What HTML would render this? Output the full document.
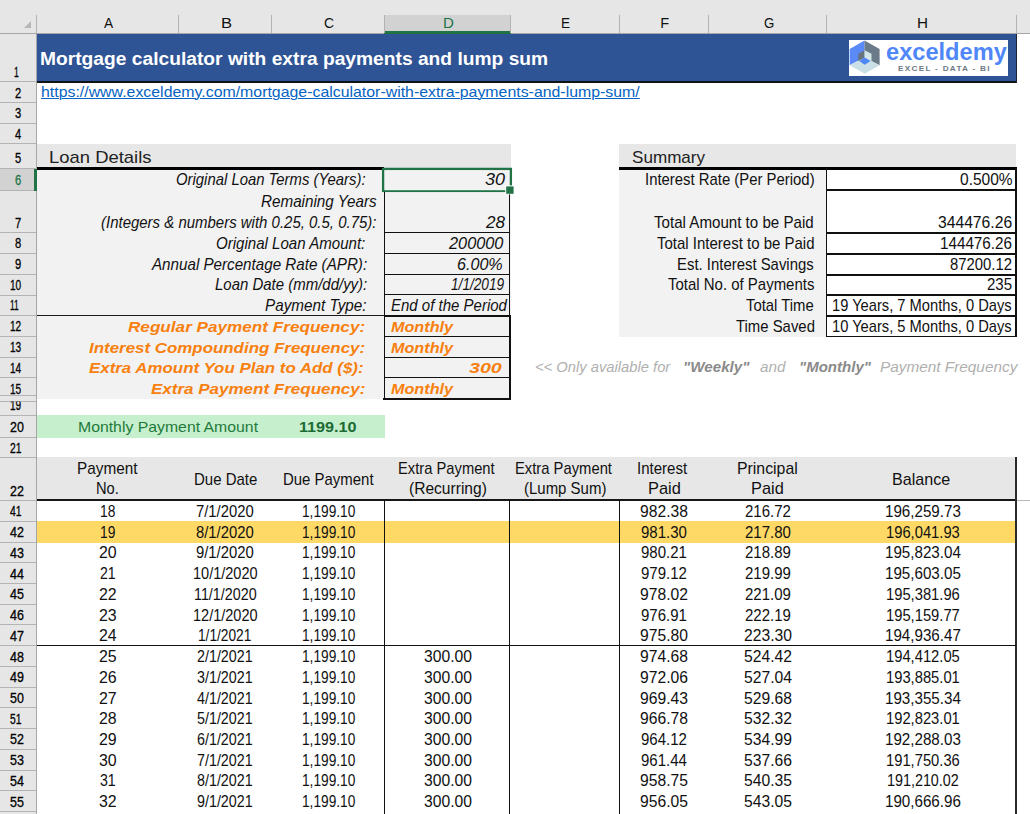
<!DOCTYPE html>
<html lang="en"><head><meta charset="utf-8"><title>Mortgage calculator with extra payments and lump sum</title>
<style>
html,body{margin:0;padding:0;background:#fff;}
body{width:1030px;height:814px;position:relative;overflow:hidden;font-family:"Liberation Sans", sans-serif;}
.r{position:absolute;}
.t{position:absolute;white-space:pre;transform-origin:0 0;line-height:1;}
.h{-webkit-text-stroke:0.3px currentColor;}
.link{text-decoration:underline;text-decoration-thickness:1px;text-underline-offset:1px;}
</style></head><body>
<div class="r" style="left:0.00px;top:0.00px;width:1030.00px;height:33.50px;background:#e6e6e6"></div>
<div class="r" style="left:0.00px;top:33.50px;width:36.50px;height:780.50px;background:#e6e6e6"></div>
<div class="r" style="left:383.50px;top:14.80px;width:127.00px;height:18.70px;background:#d2d2d2"></div>
<div class="r" style="left:0.00px;top:169.00px;width:36.00px;height:21.50px;background:#d2d2d2"></div>
<div class="r" style="left:0.00px;top:33.00px;width:1030.00px;height:1.00px;background:#a6a6a6"></div>
<div class="r" style="left:383.50px;top:31.00px;width:127.00px;height:3.00px;background:#217346"></div>
<div class="r" style="left:36.00px;top:14.80px;width:1.00px;height:18.70px;background:#b2b2b2"></div>
<div class="r" style="left:177.50px;top:14.80px;width:1.00px;height:18.70px;background:#b2b2b2"></div>
<div class="r" style="left:271.00px;top:14.80px;width:1.00px;height:18.70px;background:#b2b2b2"></div>
<div class="r" style="left:383.50px;top:14.80px;width:1.00px;height:18.70px;background:#b2b2b2"></div>
<div class="r" style="left:509.50px;top:14.80px;width:1.00px;height:18.70px;background:#b2b2b2"></div>
<div class="r" style="left:618.80px;top:14.80px;width:1.00px;height:18.70px;background:#b2b2b2"></div>
<div class="r" style="left:707.50px;top:14.80px;width:1.00px;height:18.70px;background:#b2b2b2"></div>
<div class="r" style="left:826.00px;top:14.80px;width:1.00px;height:18.70px;background:#b2b2b2"></div>
<div class="r" style="left:1015.50px;top:14.80px;width:1.00px;height:18.70px;background:#b2b2b2"></div>
<div class="r" style="left:36.00px;top:34.00px;width:1.00px;height:780.00px;background:#a6a6a6"></div>
<div class="r" style="left:0.00px;top:81.30px;width:36.00px;height:1.00px;background:#b4b4b4"></div>
<div class="r" style="left:0.00px;top:102.20px;width:36.00px;height:1.00px;background:#b4b4b4"></div>
<div class="r" style="left:0.00px;top:122.80px;width:36.00px;height:1.00px;background:#b4b4b4"></div>
<div class="r" style="left:0.00px;top:143.30px;width:36.00px;height:1.00px;background:#b4b4b4"></div>
<div class="r" style="left:0.00px;top:168.40px;width:36.00px;height:1.00px;background:#b4b4b4"></div>
<div class="r" style="left:0.00px;top:190.00px;width:36.00px;height:1.00px;background:#b4b4b4"></div>
<div class="r" style="left:0.00px;top:232.30px;width:36.00px;height:1.00px;background:#b4b4b4"></div>
<div class="r" style="left:0.00px;top:253.00px;width:36.00px;height:1.00px;background:#b4b4b4"></div>
<div class="r" style="left:0.00px;top:273.80px;width:36.00px;height:1.00px;background:#b4b4b4"></div>
<div class="r" style="left:0.00px;top:294.60px;width:36.00px;height:1.00px;background:#b4b4b4"></div>
<div class="r" style="left:0.00px;top:315.00px;width:36.00px;height:1.00px;background:#b4b4b4"></div>
<div class="r" style="left:0.00px;top:335.90px;width:36.00px;height:1.00px;background:#b4b4b4"></div>
<div class="r" style="left:0.00px;top:356.70px;width:36.00px;height:1.00px;background:#b4b4b4"></div>
<div class="r" style="left:0.00px;top:377.40px;width:36.00px;height:1.00px;background:#b4b4b4"></div>
<div class="r" style="left:0.00px;top:395.30px;width:36.00px;height:1.00px;background:#b4b4b4"></div>
<div class="r" style="left:0.00px;top:414.50px;width:36.00px;height:1.00px;background:#b4b4b4"></div>
<div class="r" style="left:0.00px;top:437.10px;width:36.00px;height:1.00px;background:#b4b4b4"></div>
<div class="r" style="left:0.00px;top:457.30px;width:36.00px;height:1.00px;background:#b4b4b4"></div>
<div class="r" style="left:0.00px;top:500.10px;width:36.00px;height:1.00px;background:#b4b4b4"></div>
<div class="r" style="left:0.00px;top:520.83px;width:36.00px;height:1.00px;background:#b4b4b4"></div>
<div class="r" style="left:0.00px;top:541.56px;width:36.00px;height:1.00px;background:#b4b4b4"></div>
<div class="r" style="left:0.00px;top:562.29px;width:36.00px;height:1.00px;background:#b4b4b4"></div>
<div class="r" style="left:0.00px;top:583.02px;width:36.00px;height:1.00px;background:#b4b4b4"></div>
<div class="r" style="left:0.00px;top:603.75px;width:36.00px;height:1.00px;background:#b4b4b4"></div>
<div class="r" style="left:0.00px;top:624.48px;width:36.00px;height:1.00px;background:#b4b4b4"></div>
<div class="r" style="left:0.00px;top:645.21px;width:36.00px;height:1.00px;background:#b4b4b4"></div>
<div class="r" style="left:0.00px;top:665.94px;width:36.00px;height:1.00px;background:#b4b4b4"></div>
<div class="r" style="left:0.00px;top:686.67px;width:36.00px;height:1.00px;background:#b4b4b4"></div>
<div class="r" style="left:0.00px;top:707.40px;width:36.00px;height:1.00px;background:#b4b4b4"></div>
<div class="r" style="left:0.00px;top:728.13px;width:36.00px;height:1.00px;background:#b4b4b4"></div>
<div class="r" style="left:0.00px;top:748.86px;width:36.00px;height:1.00px;background:#b4b4b4"></div>
<div class="r" style="left:0.00px;top:769.59px;width:36.00px;height:1.00px;background:#b4b4b4"></div>
<div class="r" style="left:0.00px;top:790.32px;width:36.00px;height:1.00px;background:#b4b4b4"></div>
<div class="r" style="left:0.00px;top:811.05px;width:36.00px;height:1.00px;background:#b4b4b4"></div>
<div class="r" style="left:0.00px;top:831.78px;width:36.00px;height:1.00px;background:#b4b4b4"></div>
<div class="r" style="left:0.00px;top:401.00px;width:36.00px;height:1.00px;background:#b4b4b4"></div>
<div class="r" style="left:0.00px;top:811.50px;width:36.00px;height:1.00px;background:#e6e6e6"></div>
<div class="r" style="left:33.70px;top:169.00px;width:3.30px;height:22.00px;background:#217346"></div>
<div class="r" style="left:37.00px;top:34.00px;width:979.00px;height:47.40px;background:#2f5496"></div>
<div class="r" style="left:37.00px;top:81.00px;width:980.00px;height:1.60px;background:#101418"></div>
<div class="r" style="left:1015.50px;top:34.00px;width:1.50px;height:48.60px;background:#1a2233"></div>
<div class="r" style="left:849.00px;top:39.80px;width:159.20px;height:35.90px;background:#ffffff"></div>
<div class="r" style="left:37.00px;top:143.80px;width:474.00px;height:24.20px;background:#e7e7e7"></div>
<div class="r" style="left:37.00px;top:168.00px;width:474.00px;height:231.40px;background:#f2f2f2"></div>
<div class="r" style="left:37.00px;top:167.00px;width:347.00px;height:2.60px;background:#000"></div>
<div class="r" style="left:37.00px;top:314.80px;width:347.00px;height:1.60px;background:#1a1a1a"></div>
<div class="r" style="left:383.60px;top:190.00px;width:1.40px;height:209.60px;background:#111"></div>
<div class="r" style="left:509.00px;top:190.00px;width:1.30px;height:126.00px;background:#111"></div>
<div class="r" style="left:508.80px;top:316.00px;width:2.00px;height:83.60px;background:#111"></div>
<div class="r" style="left:384.00px;top:232.00px;width:126.00px;height:1.30px;background:#111"></div>
<div class="r" style="left:384.00px;top:253.00px;width:126.00px;height:1.30px;background:#111"></div>
<div class="r" style="left:384.00px;top:274.00px;width:126.00px;height:1.30px;background:#111"></div>
<div class="r" style="left:384.00px;top:294.00px;width:126.00px;height:1.30px;background:#111"></div>
<div class="r" style="left:384.00px;top:336.00px;width:126.00px;height:1.30px;background:#111"></div>
<div class="r" style="left:384.00px;top:357.00px;width:126.00px;height:1.30px;background:#111"></div>
<div class="r" style="left:384.00px;top:377.00px;width:126.00px;height:1.30px;background:#111"></div>
<div class="r" style="left:384.00px;top:314.70px;width:126.60px;height:2.00px;background:#111"></div>
<div class="r" style="left:383.40px;top:397.60px;width:127.20px;height:2.10px;background:#111"></div>
<div class="r" style="left:619.30px;top:143.80px;width:397.20px;height:24.20px;background:#e7e7e7"></div>
<div class="r" style="left:619.30px;top:168.00px;width:207.70px;height:169.20px;background:#f2f2f2"></div>
<div class="r" style="left:619.30px;top:166.80px;width:397.70px;height:2.90px;background:#000"></div>
<div class="r" style="left:825.80px;top:168.00px;width:1.60px;height:169.40px;background:#111"></div>
<div class="r" style="left:1015.20px;top:168.00px;width:1.70px;height:169.40px;background:#111"></div>
<div class="r" style="left:826.00px;top:189.00px;width:190.00px;height:1.60px;background:#111"></div>
<div class="r" style="left:826.00px;top:232.00px;width:190.00px;height:1.60px;background:#111"></div>
<div class="r" style="left:826.00px;top:253.00px;width:190.00px;height:1.60px;background:#111"></div>
<div class="r" style="left:826.00px;top:274.00px;width:190.00px;height:1.60px;background:#111"></div>
<div class="r" style="left:826.00px;top:294.00px;width:190.00px;height:1.60px;background:#111"></div>
<div class="r" style="left:826.00px;top:315.00px;width:190.00px;height:1.60px;background:#111"></div>
<div class="r" style="left:825.60px;top:335.70px;width:191.40px;height:1.70px;background:#111"></div>
<div class="r" style="left:37.00px;top:414.50px;width:347.60px;height:23.20px;background:#c6efce"></div>
<div class="r" style="left:37.00px;top:457.40px;width:979.00px;height:42.10px;background:#e7e7e7"></div>
<div class="r" style="left:37.00px;top:498.70px;width:980.00px;height:2.10px;background:#161616"></div>
<div class="r" style="left:37.00px;top:521.20px;width:979.00px;height:21.60px;background:#ffd966"></div>
<div class="r" style="left:384.00px;top:500.00px;width:1.30px;height:314.00px;background:#111"></div>
<div class="r" style="left:509.00px;top:500.00px;width:1.30px;height:314.00px;background:#111"></div>
<div class="r" style="left:619.00px;top:500.00px;width:1.30px;height:314.00px;background:#111"></div>
<div class="r" style="left:1014.90px;top:457.20px;width:2.00px;height:356.80px;background:#2a2a2a"></div>
<div class="r" style="left:37.00px;top:645.00px;width:979.00px;height:1.30px;background:#111"></div>
<div class="r" style="left:1017.00px;top:500.00px;width:13.00px;height:1.40px;background:#b8b8b8"></div>
<div class="r" style="left:1016.00px;top:33.00px;width:14.00px;height:1.00px;background:#a6a6a6"></div>
<svg class="r" style="left:0;top:0" width="1030" height="814" viewBox="0 0 1030 814">
<polygon points="31,21 31,28 24,28" fill="#b7b7b7"/>
<g>
<polygon points="849.6,49 864.5,40.6 864.5,57.6 849.6,65.3" fill="#5a8af8"/>
<polygon points="864.5,40.6 879.6,49 879.6,65.3 864.5,57.6" fill="#6b7a88"/>
<polygon points="849.6,65.3 864.5,57.4 879.6,65.3 864.7,73.8" fill="#cbe0e6"/>
<polygon points="858.2,53.8 864.5,50.3 864.5,57.8 858.2,61" fill="#66747f"/>
<polygon points="864.5,50.3 871.5,53.8 871.5,61.3 864.5,57.6" fill="#d3e6ea"/>
<polygon points="864.5,57.4 870.6,61.1 864.7,64.8 859.2,61.1" fill="#4f86f7"/>
</g>
<rect x="383.1" y="168.9" width="127.8" height="22" fill="none" stroke="#217346" stroke-width="2.3"/>
<rect x="384.6" y="189.2" width="124" height="1" fill="#fff"/>
<rect x="505.2" y="185.4" width="9" height="9" fill="#fff"/>
<rect x="506.2" y="186.4" width="7.4" height="7.4" fill="#217346"/>
</svg>
<span class="t" id="t0" style="left:104.05px;top:16.00px;font-size:14.60px;color:#111;transform:scaleX(0.9400);">A</span>
<span class="t" id="t1" style="left:220.56px;top:16.00px;font-size:14.60px;color:#111;transform:scaleX(1.1375);">B</span>
<span class="t" id="t2" style="left:324.45px;top:16.00px;font-size:14.60px;color:#111;transform:scaleX(0.9600);">C</span>
<span class="t" id="t3" style="left:442.82px;top:16.00px;font-size:14.60px;color:#217346;transform:scaleX(1.0333);">D</span>
<span class="t" id="t4" style="left:561.02px;top:16.00px;font-size:14.60px;color:#111;transform:scaleX(0.9333);">E</span>
<span class="t" id="t5" style="left:660.15px;top:16.00px;font-size:14.60px;color:#111;transform:scaleX(1.0000);">F</span>
<span class="t" id="t6" style="left:763.75px;top:16.00px;font-size:14.60px;color:#111;transform:scaleX(0.9091);">G</span>
<span class="t" id="t7" style="left:917.01px;top:16.00px;font-size:14.60px;color:#111;transform:scaleX(1.0444);">H</span>
<span class="t h" id="t8" style="left:13.90px;top:65.00px;font-size:14.40px;color:#000;transform:scaleX(0.6000);">1</span>
<span class="t h" id="t9" style="left:14.70px;top:86.00px;font-size:14.40px;color:#000;transform:scaleX(0.7750);">2</span>
<span class="t h" id="t10" style="left:14.70px;top:106.00px;font-size:14.40px;color:#000;transform:scaleX(0.7750);">3</span>
<span class="t h" id="t11" style="left:14.70px;top:127.00px;font-size:14.40px;color:#000;transform:scaleX(0.7750);">4</span>
<span class="t h" id="t12" style="left:14.70px;top:151.00px;font-size:14.40px;color:#000;transform:scaleX(0.7750);">5</span>
<span class="t h" id="t13" style="left:14.70px;top:173.00px;font-size:14.40px;color:#217346;transform:scaleX(0.7750);">6</span>
<span class="t h" id="t14" style="left:14.70px;top:216.00px;font-size:14.40px;color:#000;transform:scaleX(0.7750);">7</span>
<span class="t h" id="t15" style="left:14.70px;top:236.00px;font-size:14.40px;color:#000;transform:scaleX(0.7750);">8</span>
<span class="t h" id="t16" style="left:14.70px;top:257.00px;font-size:14.40px;color:#000;transform:scaleX(0.7750);">9</span>
<span class="t h" id="t17" style="left:9.50px;top:278.00px;font-size:14.40px;color:#000;transform:scaleX(0.6998);">10</span>
<span class="t h" id="t18" style="left:9.62px;top:298.00px;font-size:14.40px;color:#000;transform:scaleX(0.5813);">11</span>
<span class="t h" id="t19" style="left:9.50px;top:319.00px;font-size:14.40px;color:#000;transform:scaleX(0.6998);">12</span>
<span class="t h" id="t20" style="left:9.50px;top:340.00px;font-size:14.40px;color:#000;transform:scaleX(0.6998);">13</span>
<span class="t h" id="t21" style="left:9.50px;top:361.00px;font-size:14.40px;color:#000;transform:scaleX(0.6998);">14</span>
<span class="t h" id="t22" style="left:9.50px;top:382.00px;font-size:14.40px;color:#000;transform:scaleX(0.6998);">15</span>
<span class="t h" id="t23" style="left:9.50px;top:398.00px;font-size:14.40px;color:#000;transform:scaleX(0.6998);clip-path:inset(3.6px -2px -2px -2px);">19</span>
<span class="t h" id="t24" style="left:10.20px;top:420.00px;font-size:14.40px;color:#000;transform:scaleX(0.8686);">20</span>
<span class="t h" id="t25" style="left:10.20px;top:441.00px;font-size:14.40px;color:#000;transform:scaleX(0.7186);">21</span>
<span class="t h" id="t26" style="left:10.20px;top:484.00px;font-size:14.40px;color:#000;transform:scaleX(0.8686);">22</span>
<span class="t h" id="t27" style="left:10.20px;top:504.00px;font-size:14.40px;color:#000;transform:scaleX(0.7186);">41</span>
<span class="t h" id="t28" style="left:10.20px;top:525.00px;font-size:14.40px;color:#000;transform:scaleX(0.8686);">42</span>
<span class="t h" id="t29" style="left:10.20px;top:546.00px;font-size:14.40px;color:#000;transform:scaleX(0.8686);">43</span>
<span class="t h" id="t30" style="left:10.20px;top:567.00px;font-size:14.40px;color:#000;transform:scaleX(0.8686);">44</span>
<span class="t h" id="t31" style="left:10.20px;top:587.00px;font-size:14.40px;color:#000;transform:scaleX(0.8686);">45</span>
<span class="t h" id="t32" style="left:10.20px;top:608.00px;font-size:14.40px;color:#000;transform:scaleX(0.8686);">46</span>
<span class="t h" id="t33" style="left:10.20px;top:629.00px;font-size:14.40px;color:#000;transform:scaleX(0.8686);">47</span>
<span class="t h" id="t34" style="left:10.20px;top:650.00px;font-size:14.40px;color:#000;transform:scaleX(0.8686);">48</span>
<span class="t h" id="t35" style="left:10.20px;top:670.00px;font-size:14.40px;color:#000;transform:scaleX(0.8686);">49</span>
<span class="t h" id="t36" style="left:10.20px;top:691.00px;font-size:14.40px;color:#000;transform:scaleX(0.8686);">50</span>
<span class="t h" id="t37" style="left:10.20px;top:712.00px;font-size:14.40px;color:#000;transform:scaleX(0.7186);">51</span>
<span class="t h" id="t38" style="left:10.20px;top:732.00px;font-size:14.40px;color:#000;transform:scaleX(0.8686);">52</span>
<span class="t h" id="t39" style="left:10.20px;top:753.00px;font-size:14.40px;color:#000;transform:scaleX(0.8686);">53</span>
<span class="t h" id="t40" style="left:10.20px;top:774.00px;font-size:14.40px;color:#000;transform:scaleX(0.8686);">54</span>
<span class="t h" id="t41" style="left:10.20px;top:795.00px;font-size:14.40px;color:#000;transform:scaleX(0.8686);">55</span>
<span class="t" id="t42" style="left:39.93px;top:50.00px;font-size:18.00px;color:#fff;font-weight:bold;transform:scaleX(1.0673);">Mortgage calculator with extra payments and lump sum</span>
<span class="t link" id="t43" style="left:40.50px;top:85.00px;font-size:14.30px;color:#0563c1;transform:scaleX(1.1104);">https://www.exceldemy.com/mortgage-calculator-with-extra-payments-and-lump-sum/</span>
<span class="t" id="t44" style="left:48.52px;top:149.00px;font-size:17.00px;color:#222;transform:scaleX(1.0849);">Loan Details</span>
<span class="t" id="t45" style="left:631.80px;top:149.00px;font-size:17.00px;color:#222;transform:scaleX(1.0050);">Summary</span>
<span class="t" id="t46" style="left:176.30px;top:171.00px;font-size:16.20px;color:#111;font-style:italic;transform:scaleX(0.9187);">Original Loan Terms (Years):</span>
<span class="t" id="t47" style="left:260.60px;top:193.00px;font-size:16.20px;color:#111;font-style:italic;transform:scaleX(0.9401);">Remaining Years</span>
<span class="t" id="t48" style="left:100.50px;top:214.00px;font-size:16.20px;color:#111;font-style:italic;transform:scaleX(0.9249);">(Integers &amp; numbers with 0.25, 0.5, 0.75):</span>
<span class="t" id="t49" style="left:216.00px;top:235.00px;font-size:16.20px;color:#111;font-style:italic;transform:scaleX(0.9304);">Original Loan Amount:</span>
<span class="t" id="t50" style="left:151.64px;top:256.00px;font-size:16.20px;color:#111;font-style:italic;transform:scaleX(0.9376);">Annual Percentage Rate (APR):</span>
<span class="t" id="t51" style="left:214.50px;top:276.00px;font-size:16.20px;color:#111;font-style:italic;transform:scaleX(0.9248);">Loan Date (mm/dd/yy):</span>
<span class="t" id="t52" style="left:265.00px;top:297.00px;font-size:16.20px;color:#111;font-style:italic;transform:scaleX(0.9425);">Payment Type:</span>
<span class="t" id="t53" style="left:128.00px;top:319.00px;font-size:15.30px;color:#f8800f;font-weight:bold;font-style:italic;transform:scaleX(1.1202);">Regular Payment Frequency:</span>
<span class="t" id="t54" style="left:89.00px;top:340.00px;font-size:15.30px;color:#f8800f;font-weight:bold;font-style:italic;transform:scaleX(1.1050);">Interest Compounding Frequency:</span>
<span class="t" id="t55" style="left:89.00px;top:360.00px;font-size:15.30px;color:#f8800f;font-weight:bold;font-style:italic;transform:scaleX(1.1039);">Extra Amount You Plan to Add ($):</span>
<span class="t" id="t56" style="left:150.70px;top:381.00px;font-size:15.30px;color:#f8800f;font-weight:bold;font-style:italic;transform:scaleX(1.1110);">Extra Payment Frequency:</span>
<span class="t" id="t57" style="left:484.70px;top:171.00px;font-size:16.20px;color:#111;font-style:italic;transform:scaleX(1.1109);">30</span>
<span class="t" id="t58" style="left:485.75px;top:214.00px;font-size:16.20px;color:#111;font-style:italic;transform:scaleX(1.0525);">28</span>
<span class="t" id="t59" style="left:449.41px;top:235.00px;font-size:16.20px;color:#111;font-style:italic;transform:scaleX(1.0070);">200000</span>
<span class="t" id="t60" style="left:457.00px;top:256.00px;font-size:16.20px;color:#111;font-style:italic;transform:scaleX(0.9955);">6.00%</span>
<span class="t" id="t61" style="left:450.80px;top:276.00px;font-size:16.20px;color:#111;font-style:italic;transform:scaleX(0.8427);">1/1/2019</span>
<span class="t" id="t62" style="left:391.00px;top:297.00px;font-size:16.20px;color:#111;font-style:italic;transform:scaleX(0.9271);">End of the Period</span>
<span class="t" id="t63" style="left:391.00px;top:319.00px;font-size:15.30px;color:#f8800f;font-weight:bold;font-style:italic;transform:scaleX(1.0579);">Monthly</span>
<span class="t" id="t64" style="left:391.00px;top:340.00px;font-size:15.30px;color:#f8800f;font-weight:bold;font-style:italic;transform:scaleX(1.0579);">Monthly</span>
<span class="t" id="t65" style="left:391.00px;top:381.00px;font-size:15.30px;color:#f8800f;font-weight:bold;font-style:italic;transform:scaleX(1.0579);">Monthly</span>
<span class="t" id="t66" style="left:469.40px;top:360.00px;font-size:15.30px;color:#f8800f;font-weight:bold;font-style:italic;transform:scaleX(1.2839);">300</span>
<span class="t" id="t67" style="left:645.38px;top:171.00px;font-size:16.20px;color:#111;transform:scaleX(0.9195);">Interest Rate (Per Period)</span>
<span class="t" id="t68" style="left:654.40px;top:214.00px;font-size:16.20px;color:#111;transform:scaleX(0.9340);">Total Amount to be Paid</span>
<span class="t" id="t69" style="left:657.40px;top:235.00px;font-size:16.20px;color:#111;transform:scaleX(0.9263);">Total Interest to be Paid</span>
<span class="t" id="t70" style="left:677.38px;top:256.00px;font-size:16.20px;color:#111;transform:scaleX(0.9209);">Est. Interest Savings</span>
<span class="t" id="t71" style="left:667.70px;top:276.00px;font-size:16.20px;color:#111;transform:scaleX(0.9245);">Total No. of Payments</span>
<span class="t" id="t72" style="left:746.00px;top:297.00px;font-size:16.20px;color:#111;transform:scaleX(0.9182);">Total Time</span>
<span class="t" id="t73" style="left:736.00px;top:318.00px;font-size:16.20px;color:#111;transform:scaleX(0.9202);">Time Saved</span>
<span class="t" id="t74" style="left:959.70px;top:171.00px;font-size:16.20px;color:#111;transform:scaleX(0.9595);">0.500%</span>
<span class="t" id="t75" style="left:938.20px;top:214.00px;font-size:16.20px;color:#111;transform:scaleX(0.9684);">344476.26</span>
<span class="t" id="t76" style="left:940.36px;top:235.00px;font-size:16.20px;color:#111;transform:scaleX(0.9402);">144476.26</span>
<span class="t" id="t77" style="left:950.30px;top:256.00px;font-size:16.20px;color:#111;transform:scaleX(0.9183);">87200.12</span>
<span class="t" id="t78" style="left:987.20px;top:276.00px;font-size:16.20px;color:#111;transform:scaleX(0.9294);">235</span>
<span class="t" id="t79" style="left:832.49px;top:297.00px;font-size:16.20px;color:#111;transform:scaleX(0.9074);">19 Years, 7 Months, 0 Days</span>
<span class="t" id="t80" style="left:832.49px;top:318.00px;font-size:16.20px;color:#111;transform:scaleX(0.9074);">10 Years, 5 Months, 0 Days</span>
<span class="t" id="t81" style="left:535.10px;top:360.00px;font-size:14.60px;color:#b0b0b0;font-style:italic;transform:scaleX(1.0104);">&lt;&lt; Only available for</span>
<span class="t" id="t82" style="left:682.96px;top:360.00px;font-size:14.60px;color:#8a8a8a;font-weight:bold;font-style:italic;transform:scaleX(1.0399);">"Weekly"</span>
<span class="t" id="t83" style="left:760.00px;top:360.00px;font-size:14.60px;color:#b0b0b0;font-style:italic;transform:scaleX(1.0463);">and</span>
<span class="t" id="t84" style="left:798.77px;top:360.00px;font-size:14.60px;color:#8a8a8a;font-weight:bold;font-style:italic;transform:scaleX(1.0308);">"Monthly"</span>
<span class="t" id="t85" style="left:880.40px;top:360.00px;font-size:14.60px;color:#b0b0b0;font-style:italic;transform:scaleX(1.0514);">Payment Frequency</span>
<span class="t" id="t86" style="left:77.90px;top:420.00px;font-size:14.40px;color:#1f7a3a;transform:scaleX(1.0979);">Monthly Payment Amount</span>
<span class="t" id="t87" style="left:299.40px;top:420.00px;font-size:14.40px;color:#1b6b33;font-weight:bold;transform:scaleX(1.1226);">1199.10</span>
<span class="t" id="t88" style="left:77.05px;top:460.00px;font-size:16.20px;color:#111;transform:scaleX(0.9466);">Payment</span>
<span class="t" id="t89" style="left:95.99px;top:480.00px;font-size:16.20px;color:#111;transform:scaleX(0.9074);">No.</span>
<span class="t" id="t90" style="left:193.97px;top:471.00px;font-size:16.20px;color:#111;transform:scaleX(0.9260);">Due Date</span>
<span class="t" id="t91" style="left:282.98px;top:471.00px;font-size:16.20px;color:#111;transform:scaleX(0.9234);">Due Payment</span>
<span class="t" id="t92" style="left:398.39px;top:460.00px;font-size:16.20px;color:#111;transform:scaleX(0.9105);">Extra Payment</span>
<span class="t" id="t93" style="left:409.24px;top:480.00px;font-size:16.20px;color:#111;transform:scaleX(0.9615);">(Recurring)</span>
<span class="t" id="t94" style="left:514.99px;top:460.00px;font-size:16.20px;color:#111;transform:scaleX(0.9133);">Extra Payment</span>
<span class="t" id="t95" style="left:523.57px;top:480.00px;font-size:16.20px;color:#111;transform:scaleX(0.9251);">(Lump Sum)</span>
<span class="t" id="t96" style="left:637.47px;top:460.00px;font-size:16.20px;color:#111;transform:scaleX(0.9292);">Interest</span>
<span class="t" id="t97" style="left:647.99px;top:480.00px;font-size:16.20px;color:#111;transform:scaleX(1.0133);">Paid</span>
<span class="t" id="t98" style="left:736.52px;top:460.00px;font-size:16.20px;color:#111;transform:scaleX(0.9788);">Principal</span>
<span class="t" id="t99" style="left:751.49px;top:480.00px;font-size:16.20px;color:#111;transform:scaleX(1.0100);">Paid</span>
<span class="t" id="t100" style="left:892.01px;top:471.00px;font-size:16.20px;color:#111;transform:scaleX(0.9949);">Balance</span>
<span class="t" id="t101" style="left:99.60px;top:503.00px;font-size:16.20px;color:#111;transform:scaleX(0.8528);">18</span>
<span class="t" id="t102" style="left:196.45px;top:503.00px;font-size:16.20px;color:#111;transform:scaleX(0.9158);">7/1/2020</span>
<span class="t" id="t103" style="left:302.20px;top:503.00px;font-size:16.20px;color:#111;transform:scaleX(0.8467);">1,199.10</span>
<span class="t" id="t104" style="left:640.25px;top:503.00px;font-size:16.20px;color:#111;transform:scaleX(0.9675);">982.38</span>
<span class="t" id="t105" style="left:745.45px;top:503.00px;font-size:16.20px;color:#111;transform:scaleX(0.9271);">216.72</span>
<span class="t" id="t106" style="left:884.51px;top:503.00px;font-size:16.20px;color:#111;transform:scaleX(0.9361);">196,259.73</span>
<span class="t" id="t107" style="left:99.60px;top:524.00px;font-size:16.20px;color:#111;transform:scaleX(0.8528);">19</span>
<span class="t" id="t108" style="left:196.45px;top:524.00px;font-size:16.20px;color:#111;transform:scaleX(0.9158);">8/1/2020</span>
<span class="t" id="t109" style="left:302.20px;top:524.00px;font-size:16.20px;color:#111;transform:scaleX(0.8467);">1,199.10</span>
<span class="t" id="t110" style="left:641.25px;top:524.00px;font-size:16.20px;color:#111;transform:scaleX(0.9271);">981.30</span>
<span class="t" id="t111" style="left:745.45px;top:524.00px;font-size:16.20px;color:#111;transform:scaleX(0.9271);">217.80</span>
<span class="t" id="t112" style="left:885.54px;top:524.00px;font-size:16.20px;color:#111;transform:scaleX(0.9111);">196,041.93</span>
<span class="t" id="t113" style="left:98.85px;top:544.00px;font-size:16.20px;color:#111;transform:scaleX(0.9832);">20</span>
<span class="t" id="t114" style="left:196.45px;top:544.00px;font-size:16.20px;color:#111;transform:scaleX(0.9158);">9/1/2020</span>
<span class="t" id="t115" style="left:302.20px;top:544.00px;font-size:16.20px;color:#111;transform:scaleX(0.8467);">1,199.10</span>
<span class="t" id="t116" style="left:641.25px;top:544.00px;font-size:16.20px;color:#111;transform:scaleX(0.9271);">980.21</span>
<span class="t" id="t117" style="left:745.45px;top:544.00px;font-size:16.20px;color:#111;transform:scaleX(0.9271);">218.89</span>
<span class="t" id="t118" style="left:884.51px;top:544.00px;font-size:16.20px;color:#111;transform:scaleX(0.9361);">195,823.04</span>
<span class="t" id="t119" style="left:99.85px;top:565.00px;font-size:16.20px;color:#111;transform:scaleX(0.8721);">21</span>
<span class="t" id="t120" style="left:192.55px;top:565.00px;font-size:16.20px;color:#111;transform:scaleX(0.8970);">10/1/2020</span>
<span class="t" id="t121" style="left:302.20px;top:565.00px;font-size:16.20px;color:#111;transform:scaleX(0.8467);">1,199.10</span>
<span class="t" id="t122" style="left:641.25px;top:565.00px;font-size:16.20px;color:#111;transform:scaleX(0.9271);">979.12</span>
<span class="t" id="t123" style="left:745.45px;top:565.00px;font-size:16.20px;color:#111;transform:scaleX(0.9271);">219.99</span>
<span class="t" id="t124" style="left:884.51px;top:565.00px;font-size:16.20px;color:#111;transform:scaleX(0.9361);">195,603.05</span>
<span class="t" id="t125" style="left:98.85px;top:586.00px;font-size:16.20px;color:#111;transform:scaleX(0.9832);">22</span>
<span class="t" id="t126" style="left:193.57px;top:586.00px;font-size:16.20px;color:#111;transform:scaleX(0.8838);">11/1/2020</span>
<span class="t" id="t127" style="left:302.20px;top:586.00px;font-size:16.20px;color:#111;transform:scaleX(0.8467);">1,199.10</span>
<span class="t" id="t128" style="left:640.25px;top:586.00px;font-size:16.20px;color:#111;transform:scaleX(0.9675);">978.02</span>
<span class="t" id="t129" style="left:745.45px;top:586.00px;font-size:16.20px;color:#111;transform:scaleX(0.9271);">221.09</span>
<span class="t" id="t130" style="left:885.54px;top:586.00px;font-size:16.20px;color:#111;transform:scaleX(0.9111);">195,381.96</span>
<span class="t" id="t131" style="left:98.85px;top:607.00px;font-size:16.20px;color:#111;transform:scaleX(0.9832);">23</span>
<span class="t" id="t132" style="left:192.55px;top:607.00px;font-size:16.20px;color:#111;transform:scaleX(0.8970);">12/1/2020</span>
<span class="t" id="t133" style="left:302.20px;top:607.00px;font-size:16.20px;color:#111;transform:scaleX(0.8467);">1,199.10</span>
<span class="t" id="t134" style="left:641.25px;top:607.00px;font-size:16.20px;color:#111;transform:scaleX(0.9271);">976.91</span>
<span class="t" id="t135" style="left:745.45px;top:607.00px;font-size:16.20px;color:#111;transform:scaleX(0.9271);">222.19</span>
<span class="t" id="t136" style="left:885.54px;top:607.00px;font-size:16.20px;color:#111;transform:scaleX(0.9111);">195,159.77</span>
<span class="t" id="t137" style="left:98.85px;top:627.00px;font-size:16.20px;color:#111;transform:scaleX(0.9832);">24</span>
<span class="t" id="t138" style="left:198.20px;top:627.00px;font-size:16.20px;color:#111;transform:scaleX(0.8467);">1/1/2021</span>
<span class="t" id="t139" style="left:302.20px;top:627.00px;font-size:16.20px;color:#111;transform:scaleX(0.8467);">1,199.10</span>
<span class="t" id="t140" style="left:640.25px;top:627.00px;font-size:16.20px;color:#111;transform:scaleX(0.9675);">975.80</span>
<span class="t" id="t141" style="left:744.45px;top:627.00px;font-size:16.20px;color:#111;transform:scaleX(0.9675);">223.30</span>
<span class="t" id="t142" style="left:884.51px;top:627.00px;font-size:16.20px;color:#111;transform:scaleX(0.9361);">194,936.47</span>
<span class="t" id="t143" style="left:98.85px;top:648.00px;font-size:16.20px;color:#111;transform:scaleX(0.9832);">25</span>
<span class="t" id="t144" style="left:197.45px;top:648.00px;font-size:16.20px;color:#111;transform:scaleX(0.8840);">2/1/2021</span>
<span class="t" id="t145" style="left:302.20px;top:648.00px;font-size:16.20px;color:#111;transform:scaleX(0.8467);">1,199.10</span>
<span class="t" id="t146" style="left:423.55px;top:648.00px;font-size:16.20px;color:#111;transform:scaleX(0.9675);">300.00</span>
<span class="t" id="t147" style="left:640.25px;top:648.00px;font-size:16.20px;color:#111;transform:scaleX(0.9675);">974.68</span>
<span class="t" id="t148" style="left:744.45px;top:648.00px;font-size:16.20px;color:#111;transform:scaleX(0.9675);">524.42</span>
<span class="t" id="t149" style="left:885.54px;top:648.00px;font-size:16.20px;color:#111;transform:scaleX(0.9111);">194,412.05</span>
<span class="t" id="t150" style="left:98.85px;top:669.00px;font-size:16.20px;color:#111;transform:scaleX(0.9832);">26</span>
<span class="t" id="t151" style="left:197.45px;top:669.00px;font-size:16.20px;color:#111;transform:scaleX(0.8840);">3/1/2021</span>
<span class="t" id="t152" style="left:302.20px;top:669.00px;font-size:16.20px;color:#111;transform:scaleX(0.8467);">1,199.10</span>
<span class="t" id="t153" style="left:423.55px;top:669.00px;font-size:16.20px;color:#111;transform:scaleX(0.9675);">300.00</span>
<span class="t" id="t154" style="left:640.25px;top:669.00px;font-size:16.20px;color:#111;transform:scaleX(0.9675);">972.06</span>
<span class="t" id="t155" style="left:744.45px;top:669.00px;font-size:16.20px;color:#111;transform:scaleX(0.9675);">527.04</span>
<span class="t" id="t156" style="left:885.54px;top:669.00px;font-size:16.20px;color:#111;transform:scaleX(0.9111);">193,885.01</span>
<span class="t" id="t157" style="left:98.85px;top:690.00px;font-size:16.20px;color:#111;transform:scaleX(0.9832);">27</span>
<span class="t" id="t158" style="left:197.45px;top:690.00px;font-size:16.20px;color:#111;transform:scaleX(0.8840);">4/1/2021</span>
<span class="t" id="t159" style="left:302.20px;top:690.00px;font-size:16.20px;color:#111;transform:scaleX(0.8467);">1,199.10</span>
<span class="t" id="t160" style="left:423.55px;top:690.00px;font-size:16.20px;color:#111;transform:scaleX(0.9675);">300.00</span>
<span class="t" id="t161" style="left:640.25px;top:690.00px;font-size:16.20px;color:#111;transform:scaleX(0.9675);">969.43</span>
<span class="t" id="t162" style="left:744.45px;top:690.00px;font-size:16.20px;color:#111;transform:scaleX(0.9675);">529.68</span>
<span class="t" id="t163" style="left:884.51px;top:690.00px;font-size:16.20px;color:#111;transform:scaleX(0.9361);">193,355.34</span>
<span class="t" id="t164" style="left:98.85px;top:710.00px;font-size:16.20px;color:#111;transform:scaleX(0.9832);">28</span>
<span class="t" id="t165" style="left:197.45px;top:710.00px;font-size:16.20px;color:#111;transform:scaleX(0.8840);">5/1/2021</span>
<span class="t" id="t166" style="left:302.20px;top:710.00px;font-size:16.20px;color:#111;transform:scaleX(0.8467);">1,199.10</span>
<span class="t" id="t167" style="left:423.55px;top:710.00px;font-size:16.20px;color:#111;transform:scaleX(0.9675);">300.00</span>
<span class="t" id="t168" style="left:640.25px;top:710.00px;font-size:16.20px;color:#111;transform:scaleX(0.9675);">966.78</span>
<span class="t" id="t169" style="left:744.45px;top:710.00px;font-size:16.20px;color:#111;transform:scaleX(0.9675);">532.32</span>
<span class="t" id="t170" style="left:885.54px;top:710.00px;font-size:16.20px;color:#111;transform:scaleX(0.9111);">192,823.01</span>
<span class="t" id="t171" style="left:98.85px;top:731.00px;font-size:16.20px;color:#111;transform:scaleX(0.9832);">29</span>
<span class="t" id="t172" style="left:197.45px;top:731.00px;font-size:16.20px;color:#111;transform:scaleX(0.8840);">6/1/2021</span>
<span class="t" id="t173" style="left:302.20px;top:731.00px;font-size:16.20px;color:#111;transform:scaleX(0.8467);">1,199.10</span>
<span class="t" id="t174" style="left:423.55px;top:731.00px;font-size:16.20px;color:#111;transform:scaleX(0.9675);">300.00</span>
<span class="t" id="t175" style="left:641.25px;top:731.00px;font-size:16.20px;color:#111;transform:scaleX(0.9271);">964.12</span>
<span class="t" id="t176" style="left:744.45px;top:731.00px;font-size:16.20px;color:#111;transform:scaleX(0.9675);">534.99</span>
<span class="t" id="t177" style="left:884.51px;top:731.00px;font-size:16.20px;color:#111;transform:scaleX(0.9361);">192,288.03</span>
<span class="t" id="t178" style="left:98.85px;top:752.00px;font-size:16.20px;color:#111;transform:scaleX(0.9832);">30</span>
<span class="t" id="t179" style="left:197.45px;top:752.00px;font-size:16.20px;color:#111;transform:scaleX(0.8840);">7/1/2021</span>
<span class="t" id="t180" style="left:302.20px;top:752.00px;font-size:16.20px;color:#111;transform:scaleX(0.8467);">1,199.10</span>
<span class="t" id="t181" style="left:423.55px;top:752.00px;font-size:16.20px;color:#111;transform:scaleX(0.9675);">300.00</span>
<span class="t" id="t182" style="left:641.25px;top:752.00px;font-size:16.20px;color:#111;transform:scaleX(0.9271);">961.44</span>
<span class="t" id="t183" style="left:744.45px;top:752.00px;font-size:16.20px;color:#111;transform:scaleX(0.9675);">537.66</span>
<span class="t" id="t184" style="left:885.54px;top:752.00px;font-size:16.20px;color:#111;transform:scaleX(0.9111);">191,750.36</span>
<span class="t" id="t185" style="left:99.85px;top:772.00px;font-size:16.20px;color:#111;transform:scaleX(0.8721);">31</span>
<span class="t" id="t186" style="left:197.45px;top:772.00px;font-size:16.20px;color:#111;transform:scaleX(0.8840);">8/1/2021</span>
<span class="t" id="t187" style="left:302.20px;top:772.00px;font-size:16.20px;color:#111;transform:scaleX(0.8467);">1,199.10</span>
<span class="t" id="t188" style="left:423.55px;top:772.00px;font-size:16.20px;color:#111;transform:scaleX(0.9675);">300.00</span>
<span class="t" id="t189" style="left:640.25px;top:772.00px;font-size:16.20px;color:#111;transform:scaleX(0.9675);">958.75</span>
<span class="t" id="t190" style="left:744.45px;top:772.00px;font-size:16.20px;color:#111;transform:scaleX(0.9675);">540.35</span>
<span class="t" id="t191" style="left:886.56px;top:772.00px;font-size:16.20px;color:#111;transform:scaleX(0.8861);">191,210.02</span>
<span class="t" id="t192" style="left:98.85px;top:793.00px;font-size:16.20px;color:#111;transform:scaleX(0.9832);">32</span>
<span class="t" id="t193" style="left:197.45px;top:793.00px;font-size:16.20px;color:#111;transform:scaleX(0.8840);">9/1/2021</span>
<span class="t" id="t194" style="left:302.20px;top:793.00px;font-size:16.20px;color:#111;transform:scaleX(0.8467);">1,199.10</span>
<span class="t" id="t195" style="left:423.55px;top:793.00px;font-size:16.20px;color:#111;transform:scaleX(0.9675);">300.00</span>
<span class="t" id="t196" style="left:640.25px;top:793.00px;font-size:16.20px;color:#111;transform:scaleX(0.9675);">956.05</span>
<span class="t" id="t197" style="left:744.45px;top:793.00px;font-size:16.20px;color:#111;transform:scaleX(0.9675);">543.05</span>
<span class="t" id="t198" style="left:884.51px;top:793.00px;font-size:16.20px;color:#111;transform:scaleX(0.9361);">190,666.96</span>
<span class="t" id="t199" style="left:885.90px;top:41.00px;font-size:23.00px;color:#4f87f8;font-weight:bold;transform:scaleX(1.0267);">exceldemy</span>
<span class="t" id="t200" style="left:898.30px;top:65.00px;font-size:7.80px;color:#6d7a84;font-weight:bold;letter-spacing:1.20px;transform:scaleX(1.0530);">EXCEL - DATA - BI</span>
</body></html>
